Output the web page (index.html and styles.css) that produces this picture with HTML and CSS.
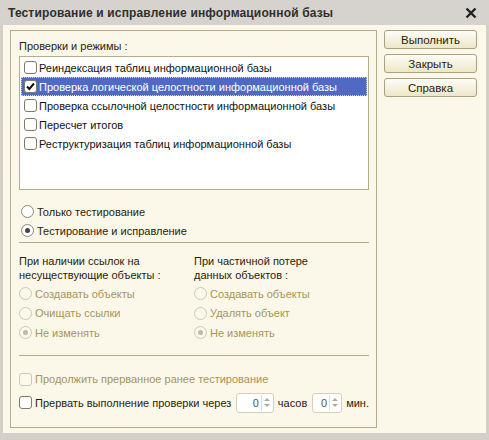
FILE: index.html
```html
<!DOCTYPE html>
<html lang="ru">
<head>
<meta charset="utf-8">
<link rel="stylesheet" href="styles.css">
</head>
<body>
<div class="window">
  <div class="titlebar">
    <span class="title">Тестирование и исправление информационной базы</span>
    <svg class="close" width="12" height="12" viewBox="0 0 12 12"><path d="M1.5 1.5 L10.5 10.5 M10.5 1.5 L1.5 10.5" stroke="#222" stroke-width="2.4" fill="none"/></svg>
  </div>
  <div class="body">
    <div class="group">
      <div class="label">Проверки и режимы :</div>
      <div class="list">
        <div class="row"><span class="cb"></span><span>Реиндексация таблиц информационной базы</span></div>
        <div class="row selected"><span class="cb checked"><svg width="11" height="11" viewBox="0 0 11 11"><path d="M2 5.5 L4.3 8 L9 2.5" stroke="#111" stroke-width="2" fill="none"/></svg></span><span>Проверка логической целостности информационной базы</span></div>
        <div class="row"><span class="cb"></span><span>Проверка ссылочной целостности информационной базы</span></div>
        <div class="row"><span class="cb"></span><span>Пересчет итогов</span></div>
        <div class="row"><span class="cb"></span><span>Реструктуризация таблиц информационной базы</span></div>
      </div>
      <div class="modes">
        <div class="opt"><span class="rb"></span><span>Только тестирование</span></div>
        <div class="opt"><span class="rb on"></span><span>Тестирование и исправление</span></div>
      </div>
      <div class="sep"></div>
      <div class="cols">
        <div class="col">
          <div class="caption">При наличии ссылок на<br>несуществующие объекты :</div>
          <div class="opt dis"><span class="rb"></span><span>Создавать объекты</span></div>
          <div class="opt dis"><span class="rb"></span><span>Очищать ссылки</span></div>
          <div class="opt dis"><span class="rb on"></span><span>Не изменять</span></div>
        </div>
        <div class="col col2">
          <div class="caption">При частичной потере<br>данных объектов :</div>
          <div class="opt dis"><span class="rb"></span><span>Создавать объекты</span></div>
          <div class="opt dis"><span class="rb"></span><span>Удалять объект</span></div>
          <div class="opt dis"><span class="rb on"></span><span>Не изменять</span></div>
        </div>
      </div>
      <div class="sep sep2"></div>
      <div class="opt dis cont"><span class="cb"></span><span>Продолжить прерванное ранее тестирование</span></div>
      <div class="opt limit">
        <span class="cb"></span><span>Прервать выполнение проверки через</span>
        <span class="spin w1"><span class="val">0</span><span class="arrows"><i class="up"></i><i class="down"></i></span></span>
        <span>часов</span>
        <span class="spin w2"><span class="val">0</span><span class="arrows"><i class="up"></i><i class="down"></i></span></span>
        <span>мин.</span>
      </div>
    </div>
    <div class="buttons">
      <div class="btn">Выполнить</div>
      <div class="btn">Закрыть</div>
      <div class="btn">Справка</div>
    </div>
  </div>
</div>
</body>
</html>
```
FILE: styles.css
```css
html, body { margin: 0; padding: 0; background: #ffffff; }
body { font-family: "Liberation Sans", Arial, sans-serif; font-size: 11px; color: #2a2208; }
.window { width: 489px; height: 440px; background: #d4d0c8; display: flex; flex-direction: column; }
.titlebar { height: 25px; flex: none; display: flex; align-items: center; justify-content: space-between; padding: 0 12px 0 8px; background: #d6d3ce; }
.title { font-weight: bold; font-size: 12px; color: #2f2f2f; letter-spacing: 0.15px; }
.close { display: block; }
.body { flex: none; height: 408px; margin: 0 3px; background: #fbf8e9; display: flex; padding: 5px 0 0 7px; box-sizing: border-box; gap: 7px; }
.group { width: 367px; height: 398px; box-sizing: border-box; border: 1px solid #b5ad86; padding: 8px 7px 0 8px; display: flex; flex-direction: column; white-space: nowrap; }
.label { height: 16px; line-height: 14px; }
.list { height: 134px; flex: none; box-sizing: border-box; border: 1px solid #b5ad86; background: #fff; padding: 1px 1px; margin-top: 1px; color: #111; }
.row { height: 19px; display: flex; align-items: center; padding-left: 3px; gap: 1px; }
.row.selected { background: #506ac4; color: #fff; outline: 1px dotted #c8d0f0; outline-offset: -1px; }
.cb { width: 11px; height: 11px; border: 1px solid #7f7966; border-radius: 3px; background: #fff; display: inline-flex; align-items: center; justify-content: center; flex: none; margin-right: 1px; }
.cb svg { display: block; }
.modes { margin-top: 12px; }
.opt { height: 19px; display: flex; align-items: center; gap: 2px; }
.rb { width: 11px; height: 11px; border: 1px solid #8d8871; border-radius: 50%; background: #fff; display: inline-flex; align-items: center; justify-content: center; flex: none; margin-right: 1px; }
.rb.on::after { content: ""; width: 5px; height: 5px; border-radius: 50%; background: #444; }
.modes .opt { padding-left: 2px; }
.sep { height: 1px; flex: none; background: #b5ad86; margin: 2px 0 0 0; }
.cols { display: flex; margin-top: 11px; }
.col { width: 177px; }
.caption { line-height: 14px; height: 28px; margin-bottom: 2px; }
.col .opt { height: 19.5px; }
.dis { color: #a6955c; }
.dis .rb { border-color: #cdc8b2; background: #fbf8ee; }
.dis .rb.on::after { background: #bdb9ac; }
.dis .cb { border-color: #cdc8b2; background: #fbf8ee; }
.sep2 { margin-top: 12px; }
.cont { margin-top: 14px; }
.limit { margin-top: 4px; height: 20px; }
.spin { height: 20px; border: 1px solid #d6d0b6; border-radius: 3px; background: #fff; display: inline-flex; align-items: center; justify-content: flex-end; box-sizing: border-box; margin: 0 2px 0 3px; color: #555; }
.spin.w1 { width: 39px; }
.spin.w2 { width: 31px; }
.val { padding-right: 2px; }
.arrows { width: 10px; height: 16px; display: flex; flex-direction: column; align-items: center; justify-content: center; gap: 3px; border-left: 1px solid #e4dfcc; margin-right: 1px; }
.arrows i { width: 0; height: 0; border-left: 3px solid transparent; border-right: 3px solid transparent; }
.arrows .up { border-bottom: 3px solid #b0ab9a; }
.arrows .down { border-top: 3px solid #b0ab9a; }
.buttons { display: flex; flex-direction: column; gap: 5px; padding-top: 0; }
.btn { width: 93px; height: 19px; box-sizing: border-box; border: 1px solid #a8a07f; border-radius: 3px; background: linear-gradient(#fefdf6, #ede6c9); display: flex; align-items: center; justify-content: center; color: #2a2208; font-size: 11.5px; }
```
